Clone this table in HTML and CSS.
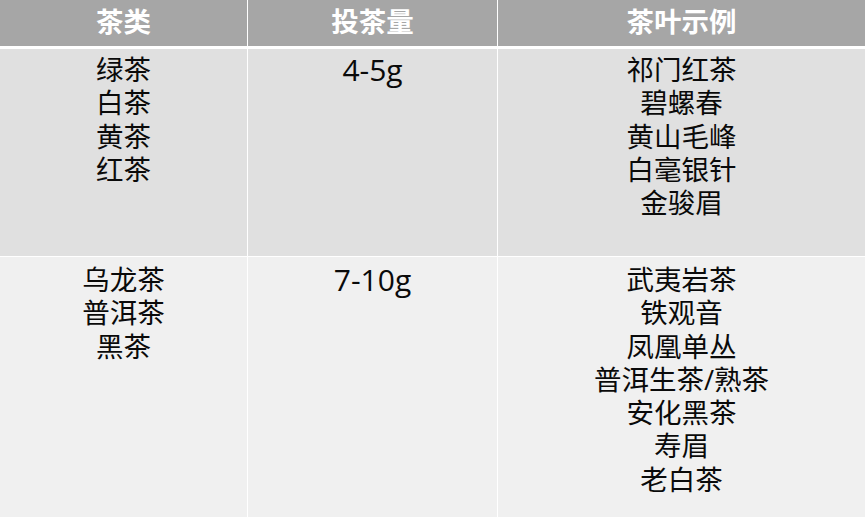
FILE: index.html
```html
<!DOCTYPE html>
<html lang="zh">
<head>
<meta charset="utf-8">
<link rel="stylesheet" href="styles.css">
</head>
<body>
<div class="table">
  <div class="cell head">茶类</div>
  <div class="cell head">投茶量</div>
  <div class="cell head">茶叶示例</div>

  <div class="cell r1"><div class="line">绿茶</div><div class="line">白茶</div><div class="line">黄茶</div><div class="line">红茶</div></div>
  <div class="cell r1 num"><div class="line">4-5g</div></div>
  <div class="cell r1"><div class="line">祁门红茶</div><div class="line">碧螺春</div><div class="line">黄山毛峰</div><div class="line">白毫银针</div><div class="line">金骏眉</div></div>

  <div class="cell r2"><div class="line">乌龙茶</div><div class="line">普洱茶</div><div class="line">黑茶</div></div>
  <div class="cell r2 num"><div class="line">7-10g</div></div>
  <div class="cell r2"><div class="line">武夷岩茶</div><div class="line">铁观音</div><div class="line">凤凰单丛</div><div class="line">普洱生茶/熟茶</div><div class="line">安化黑茶</div><div class="line">寿眉</div><div class="line">老白茶</div></div>
</div>
</body>
</html>
```
FILE: styles.css
```css
html, body {
  margin: 0;
  padding: 0;
  background: #ffffff;
}
.table {
  width: 865px;
  height: 517px;
  display: grid;
  grid-template-columns: 247px 249px 1fr;
  grid-template-rows: 48px 207px 260px;
  gap: 1px;
  background: #ffffff;
  overflow: hidden;
  font-family: "Open Sans", "Noto Sans CJK SC", sans-serif;
  color: #0a0a0a;
}
.cell {
  text-align: center;
  font-size: 27.5px;
  line-height: 33.3px;
  box-sizing: border-box;
}
.line {
  height: 33.3px;
}
.num {
  font-size: 30px;
}
.head {
  background: #a6a6a6;
  color: #ffffff;
  font-weight: bold;
  line-height: 40px;
  border-bottom: 2px solid #ffffff;
  font-family: "Noto Sans CJK SC", sans-serif;
}
.r1 {
  background: #e0e0e0;
  padding-top: 4px;
}
.r2 {
  background: #f0f0f0;
  padding-top: 6px;
}
```
